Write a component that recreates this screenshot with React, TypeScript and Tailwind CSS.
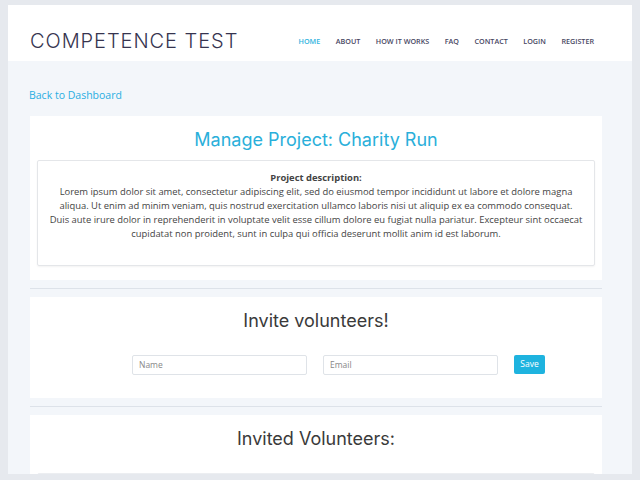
import React from "react";

const heading = { fontFamily: "Inter, 'Noto Sans', sans-serif" };

export default function App() {
  const nav = ["HOME", "ABOUT", "HOW IT WORKS", "FAQ", "CONTACT", "LOGIN", "REGISTER"];
  return (
    <div className="h-[480px] w-[640px] overflow-hidden bg-[#e6e9ee] pl-2 pr-2 pt-[5px]" style={{ fontFamily: "'Open Sans', sans-serif" }}>
      <div className="h-[469px] overflow-hidden bg-[#f3f6fa]">
        <header className="flex h-[56px] items-start justify-between bg-white pl-[22px] pr-[38px] pt-[26px]">
          <div className="text-[20px] font-light leading-[20px] tracking-[0.95px] text-[#36344f]" style={heading}>
            COMPETENCE TEST
          </div>
          <nav className="flex gap-[15.5px] pt-[5px] text-[7.2px] font-semibold leading-[10px]">
            {nav.map((n, i) => (
              <span key={n} className={i === 0 ? "text-[#2fb3de]" : "text-[#47465f]"}>
                {n}
              </span>
            ))}
          </nav>
        </header>

        <div className="pl-[21px] pt-[27px] text-[10.5px] leading-[14px] text-[#2aaee2]">Back to Dashboard</div>

        <div className="ml-[22px] mt-[14px] w-[572px]">
          <section className="h-[164px] bg-white px-[7px] pt-[13px]">
            <h1 className="text-center text-[18px] leading-[22px] text-[#2aafda]" style={heading}>
              Manage Project: Charity Run
            </h1>
            <div className="mt-[9px] h-[106px] rounded-[2px] border border-[#e4e6e9] px-[10px] pt-[10px] text-center text-[9.42px] leading-[14px] text-[#444] shadow-[0_1px_2px_rgba(0,0,0,0.05)]">
              <div className="font-bold">Project description:</div>
              <p>
                Lorem ipsum dolor sit amet, consectetur adipiscing elit, sed do eiusmod tempor incididunt ut labore et dolore magna aliqua. Ut enim ad minim veniam, quis nostrud exercitation ullamco laboris nisi ut aliquip ex ea commodo consequat.
                <br />
                Duis aute irure dolor in reprehenderit in voluptate velit esse cillum dolore eu fugiat nulla pariatur. Excepteur sint occaecat
                <br />
                cupidatat non proident, sunt in culpa qui officia deserunt mollit anim id est laborum.
              </p>
            </div>
          </section>

          <div className="py-[8px]">
            <div className="h-px bg-[#dde2e9]" />
          </div>

          <section className="h-[101px] bg-white pt-[13px]">
            <h2 className="text-center text-[18px] leading-[22px] text-[#3a3a3a]" style={heading}>
              Invite volunteers!
            </h2>
            <div className="ml-[102px] mt-[23px] flex items-start gap-[16px]">
              <div className="flex h-[20px] w-[175px] items-center rounded-[2px] border border-[#dfe3e8] pl-[6px] text-[8.5px] text-[#888]">Name</div>
              <div className="flex h-[20px] w-[175px] items-center rounded-[2px] border border-[#dfe3e8] pl-[6px] text-[8.5px] text-[#888]">Email</div>
              <div className="flex h-[19px] w-[31px] items-center justify-center rounded-[2px] bg-[#1eb3df] text-[8.5px] text-white">Save</div>
            </div>
          </section>

          <div className="py-[8px]">
            <div className="h-px bg-[#dde2e9]" />
          </div>

          <section className="h-[80px] bg-white px-[7px] pt-[13px]">
            <h2 className="text-center text-[18px] leading-[22px] text-[#3a3a3a]" style={heading}>
              Invited Volunteers:
            </h2>
            <div className="mt-[23px] h-[20px] rounded-[2px] border border-[#eceef1] bg-[#fafbfc]" />
          </section>
        </div>
      </div>
    </div>
  );
}
